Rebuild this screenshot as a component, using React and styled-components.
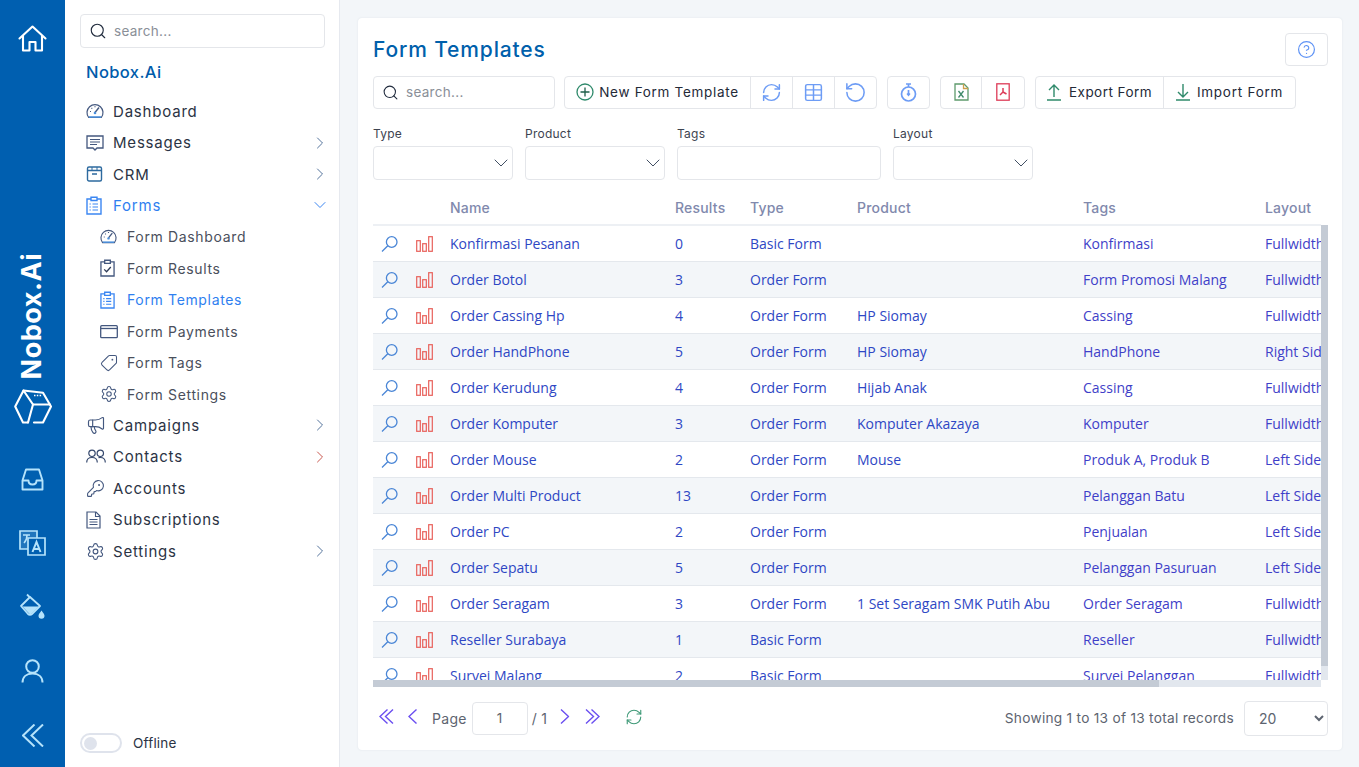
import React from "react";
import styled, { createGlobalStyle } from "styled-components";
import { Search, Tag, Settings, Megaphone, KeyRound, RefreshCw, Table, RotateCcw, CircleHelp, ChevronDown, ChevronRight } from "lucide-react";

const UI = `Inter, "Open Sans", sans-serif`;
const BODY = `"Open Sans", "Noto Sans", sans-serif`;

const Global = createGlobalStyle`
  html, body { margin: 0; padding: 0; height: 100%; background: #f3f6f9; }
  * { box-sizing: border-box; }
  #root { height: 100%; }
`;

const Shell = styled.div`
  display: flex; height: 767px; overflow: hidden; font-family: ${UI}; color: #2b3344;
`;
const Rail = styled.nav`
  width: 65px; flex: none; background: #005fb0; display: flex; flex-direction: column; align-items: center; padding-top: 6px;
`;
const RailSlot = styled.div`
  width: 65px; height: 64px; flex: none; display: flex; align-items: center; justify-content: center;
  color: ${(p) => (p.$bright ? "#ffffff" : "#b5e3fb")};
`;
const Brand = styled.div`
  margin-top: auto; display: flex; flex-direction: column; align-items: center; color: #fff;
`;
const BrandText = styled.span`
  writing-mode: vertical-rl; transform: rotate(180deg); font-size: 27px; font-weight: 700; letter-spacing: 0.5px; line-height: 30px;
  margin-bottom: 10px; margin-left: -1px;
`;
const Cube = styled.svg`
  width: 38px; height: 35px; margin-bottom: 23px; display: block;
`;

const Side = styled.aside`
  width: 275px; flex: none; background: #fff; border-right: 1px solid #e6e9ef; display: flex; flex-direction: column; padding: 14px 14px 14px 15px;
`;
const SearchBox = styled.div`
  display: flex; align-items: center; gap: 7px; height: ${(p) => p.$h || 34}px; width: ${(p) => p.$w || "100%"};
  border: 1px solid #e4e6ea; border-radius: 4px; padding: 0 8px; flex: none; background: #fff; color: #1f2a3c;
`;
const SearchHint = styled.span`
  font-size: 13.5px; color: #8a8f98; letter-spacing: 0.3px; margin-top: -1px;
`;
const SideBrand = styled.div`
  font-size: 16.5px; font-weight: 500; color: #005cab; margin: 14px 0 13.5px 6px; line-height: 20px; letter-spacing: 0.4px;
`;
const Menu = styled.ul`
  list-style: none; margin: 0; padding: 0;
`;
const MenuItem = styled.li`
  height: 31.43px; display: flex; align-items: center; padding-left: ${(p) => (p.$sub ? 20 : 6)}px;
  font-size: ${(p) => (p.$sub ? 14 : 15)}px; letter-spacing: ${(p) => (p.$sub ? 0.65 : 0.8)}px;
  color: ${(p) => (p.$active ? "#2f7ff0" : p.$sub ? "#4a4f5c" : "#2b3344")};
`;
const MenuIcon = styled.span`
  width: 27px; flex: none; display: flex; align-items: center;
  color: ${(p) => (p.$active ? "#3b86f2" : "#44587f")};
`;
const MenuLabel = styled.span`
  flex: 1;
`;
const MenuArrow = styled.span`
  display: flex; color: ${(p) => p.$c || "#54739c"}; margin-right: -5px;
`;
const OfflineRow = styled.div`
  margin-top: auto; display: flex; align-items: center; gap: 11px; font-size: 13.5px; color: #2b3344; letter-spacing: 0.2px;
`;
const Toggle = styled.span`
  width: 42px; height: 20px; border: 2px solid #dfe3ec; border-radius: 10px; padding: 2px; display: block;
  &::before { content: ""; display: block; width: 13px; height: 13px; border-radius: 50%; background: #dfe3ec; }
`;

const Main = styled.main`
  flex: 1; min-width: 0; padding: 18px 17px 17px 18px;
`;
const Card = styled.section`
  height: 732px; background: #fff; border-radius: 4px; box-shadow: 0 0 2px rgba(40, 60, 90, 0.1); padding: 15px 14px 15px 15px; display: flex; flex-direction: column;
`;
const TitleRow = styled.header`
  display: flex; justify-content: space-between; align-items: center; height: 33px;
`;
const Title = styled.h1`
  margin: 0; font-size: 21px; font-weight: 500; color: #0060ab; letter-spacing: 0.85px;
`;
const HelpButton = styled.button`
  width: 43px; height: 33px; border: 1px solid #e4e6ea; border-radius: 4px; background: #fff; display: flex; align-items: center; justify-content: center; color: #5f93f5; padding: 0;
`;
const Toolbar = styled.div`
  display: flex; margin-top: 10px; height: 33px; flex: none;
`;
const Group = styled.div`
  display: flex; border: 1px solid #e4e6ea; border-radius: 4px; margin-left: ${(p) => p.$ml || 10}px; height: 33px;
`;
const ToolButton = styled.button`
  width: ${(p) => p.$w}px; height: 31px; display: flex; align-items: center; justify-content: center; gap: ${(p) => p.$gap || 7}px; background: none; border: 0; padding: 0 0 1px; font-family: ${UI};
  font-size: 13.5px; letter-spacing: ${(p) => p.$ls || 0.62}px; white-space: nowrap;
  & + & { border-left: 1px solid #e4e6ea; }
  color: ${(p) => p.$c || "#242a38"};
`;
const ToolLabel = styled.span`
  color: #242a38;
`;
const Filters = styled.div`
  display: flex; gap: 12px; margin-top: 15px; flex: none;
`;
const Filter = styled.label`
  display: block; width: ${(p) => p.$w}px; font-size: 12px; line-height: 20px; color: #3d4350; letter-spacing: 0.25px;
`;
const SelectBox = styled.div`
  height: 34px; margin-top: 2px; border: 1px solid #e4e6ea; border-radius: 4px; display: flex; align-items: center; justify-content: flex-end; color: #414f63;
`;

const TableFrame = styled.div`
  position: relative; margin-top: 10px; height: 497px; width: 955px; flex: none;
`;
const TableClip = styled.div`
  width: 948px; height: 490px; overflow: hidden;
`;
const TrackV = styled.div`
  position: absolute; right: 0; top: 35px; width: 7px; height: 455px; background: #e2e7ee;
`;
const ThumbV = styled.div`
  height: 441px; background: #c4cbd5;
`;
const TrackH = styled.div`
  position: absolute; left: 0; bottom: 0; width: 948px; height: 7px; background: #e2e7ee;
`;
const ThumbH = styled.div`
  width: 786px; height: 7px; background: #c4cbd5;
`;
const DataTable = styled.table`
  table-layout: fixed; width: 1143px; border-collapse: separate; border-spacing: 0;
`;
const HeadCell = styled.th`
  background: #fff; height: 36px; border-bottom: 2px solid #edf0f4; text-align: left; padding: 1px 11px 0;
  font-size: 14px; font-weight: 500; color: #8189ad; letter-spacing: 0.2px; font-family: ${UI};
`;
const Row = styled.tr`
  background: ${(p) => (p.$odd ? "#f3f6f9" : "#fff")};
`;
const Cell = styled.td`
  height: 36px; padding: 0 11px; border-bottom: 1px solid #e4e8ed; font-family: ${BODY}; font-size: 14px; white-space: nowrap; overflow: hidden;
  color: ${(p) => p.$c || "#2e47c4"};
`;
const IconCell = styled(Cell)`
  padding: 0 ${(p) => p.$pr || 0}px 0 0;
  & svg { display: block; margin: 0 auto; }
`;

const Pager = styled.footer`
  display: flex; align-items: center; margin-top: 14px; height: 34px; flex: none; font-size: 14px; color: #5d6470; letter-spacing: 0.3px;
`;
const PagerIcon = styled.span`
  display: flex; width: ${(p) => p.$w}px; justify-content: center; color: ${(p) => p.$c || "#6b4ff0"}; margin-top: -3px;
`;
const PageInput = styled.div`
  width: 56px; height: 33px; border: 1px solid #e4e6ea; border-radius: 4px; display: flex; align-items: center; justify-content: center; margin: 0 4px; font-size: 13.5px;
`;
const Records = styled.span`
  margin-left: auto; font-size: 13.7px; letter-spacing: 0.27px;
`;
const PageSize = styled.select`
  width: 84px; height: 35px; margin-left: 10px; border: 1px solid #e4e6ea; border-radius: 4px; background: #fff; color: #5d6470; font-family: ${UI}; font-size: 14px; padding-left: 10px;
`;
const Gap = styled.span`
  width: ${(p) => p.$w}px; flex: none;
`;

/* drawn icons */
const HomeIcon = () => (
  <svg width="29" height="27" viewBox="0 0 29 27" fill="none" stroke="currentColor" strokeWidth="2.100" strokeLinejoin="round" strokeLinecap="round">
    <path d="M1.500 13.500L14.500 1.500l13 12" />
    <path d="M5 11v14.500h6.500v-8.500h6v8.500H24V11" />
  </svg>
);
const InboxIcon = () => (
  <svg width="23" height="23" viewBox="0 0 23 23" fill="none" stroke="currentColor" strokeWidth="1.900" strokeLinejoin="round">
    <path d="M5 1.500h13l3.500 11v9H1.500v-9z" />
    <path d="M1.500 12.500h6c0 2.500 1.800 4 4 4s4-1.500 4-4h6" />
  </svg>
);
const LangIcon = () => (
  <svg width="27" height="26" viewBox="0 0 27 26" fill="none" stroke="currentColor" strokeWidth="1.700" strokeLinejoin="miter">
    <path d="M1 1h17v18H1z" fill="rgba(181,227,251,.18)" />
    <path d="M9 8h17v17H9z" fill="#005fb0" />
    <path d="M4 5h7M8 5c0 3-1 6-3 8" strokeWidth="1.500" />
    <path d="M13.500 22l4-10 4 10M15 19h5" strokeWidth="2" />
  </svg>
);
const PaintIcon = () => (
  <svg width="28" height="28" viewBox="0 0 28 28" fill="none">
    <path d="M8 1.500l3 3" stroke="currentColor" strokeWidth="1.800" />
    <path d="M11 4L2 13l7 8c1 1 3 1 4 0l8-8z" stroke="currentColor" strokeWidth="1.800" strokeLinejoin="round" />
    <path d="M3.500 13.500h16l-7 7c-.8.800-1.800.800-2.500 0z" fill="currentColor" />
    <path d="M22.500 17.500c-1.800 2.500-3 3.800-3 5.300a3 3 0 0 0 6 0c0-1.500-1.200-2.800-3-5.300z" fill="currentColor" />
  </svg>
);
const UserIcon = () => (
  <svg width="23" height="24" viewBox="0 0 23 24" fill="none" stroke="currentColor" strokeWidth="2">
    <circle cx="11.500" cy="7.500" r="6.300" />
    <path d="M1.500 23.500c0-5.500 4-9 10-9s10 3.500 10 9" />
  </svg>
);
const DoubleChevron = ({ w, h, dir, sw = 1.5 }) => {
  const mid = h / 2;
  const arm = h / 2;
  const d = w - arm;
  const p = (x) => `M${x + arm} 0.5L${x} ${mid}L${x + arm} ${h - 0.5}`;
  return (
    <svg width={w + 2} height={h} viewBox={`-1 0 ${w + 2} ${h}`} fill="none" stroke="currentColor" strokeWidth={sw} style={dir === "right" ? { transform: "scaleX(-1)" } : undefined}>
      <path d={p(0)} /><path d={p(d)} />
    </svg>
  );
};
const SingleChevron = ({ h, dir }) => (
  <svg width={h / 2 + 2} height={h} viewBox={`-1 0 ${h / 2 + 2} ${h}`} fill="none" stroke="currentColor" strokeWidth="1.400" style={dir === "right" ? { transform: "scaleX(-1)" } : undefined}>
    <path d={`M${h / 2} 0.500L0 ${h / 2}L${h / 2} ${h - 0.5}`} />
  </svg>
);
const GaugeIcon = ({ s = 18 }) => (
  <svg width={s} height={s} viewBox="0 0 18 18" fill="none" stroke="currentColor" strokeWidth="1.200">
    <path d="M2.700 15.500A8 8 0 1 1 15.300 15.500z" />
    <path d="M3 15h12" stroke="#4c90dc" strokeWidth="1.600" />
    <path d="M9 10.500l4-5" strokeWidth="1.400" />
    <path d="M4 9.500h1M5.500 6l.7.700M9 4.300v1" />
    <circle cx="9" cy="11" r="1.300" fill="#4c90dc" stroke="none" />
  </svg>
);
const ChatIcon = () => (
  <svg width="18" height="18" viewBox="0 0 18 18" fill="none" stroke="currentColor" strokeWidth="1.300">
    <path d="M1 2h16v12h-6l-2 2-2-2H1z" />
    <path d="M4 5.500h10M4 8h10M4 10.500h7" strokeWidth="1.100" />
  </svg>
);
const BoxIcon = () => (
  <svg width="17" height="18" viewBox="0 0 17 18" fill="none" stroke="#2d6a9f" strokeWidth="1.400">
    <rect x="1.500" y="2" width="14" height="14" rx="1.500" />
    <path d="M1.500 5.500h14M6 9h5" />
    <path d="M6 2v3.500M11 2v3.500" strokeWidth="1" />
  </svg>
);
const ClipListIcon = ({ w = 16, h = 19 }) => (
  <svg width={w} height={h} viewBox="0 0 16 19" fill="none" stroke="currentColor" strokeWidth="1.400">
    <path d="M5 3H1v15h14V3h-4" />
    <path d="M5 1.200h6V4.500H5z" />
    <path d="M6.500 8H12M6.500 11H12M6.500 14H12M3.500 8h1.300M3.500 11h1.300M3.500 14h1.300" strokeWidth="1.200" />
  </svg>
);
const ClipCheckIcon = () => (
  <svg width="15" height="18" viewBox="0 0 16 19" fill="none" stroke="currentColor" strokeWidth="1.400">
    <path d="M5 3H1v15h14V3h-4" />
    <path d="M5 1.200h6V4.500H5z" />
    <path d="M4.500 11l2.500 2.500 4.500-5" stroke="#2f3c58" />
  </svg>
);
const CardIcon = () => (
  <svg width="18" height="15" viewBox="0 0 18 15" fill="none" stroke="currentColor" strokeWidth="1.300">
    <rect x="0.700" y="1.700" width="16.600" height="12" rx="1" />
    <path d="M0.700 4.500h16.600" />
  </svg>
);
const PeopleIcon = () => (
  <svg width="20" height="15" viewBox="0 0 20 15" fill="none" stroke="#35486d" strokeWidth="1.200">
    <circle cx="6" cy="4.300" r="3.200" />
    <circle cx="14.300" cy="4.300" r="3.200" />
    <path d="M0.700 13.500c0-3 2.200-5 5.300-5s5.300 2 5.300 5" />
    <path d="M12.500 8.600c.6-.1 1.200-.1 1.800-.1 3 0 5 2 5 5" />
  </svg>
);
const DocIcon = () => (
  <svg width="15" height="18" viewBox="0 0 15 18" fill="none" stroke="currentColor" strokeWidth="1.200">
    <path d="M1 1h9l4 4v12H1z" />
    <path d="M9.500 1v4.500H14M3.500 8.500h8M3.500 11h8M3.500 13.500h8" strokeWidth="1.100" />
  </svg>
);
const BarsIcon = () => (
  <svg width="17" height="16" viewBox="0 0 17 16" fill="none" stroke="#e8605a" strokeWidth="1.200">
    <rect x="0.700" y="4.700" width="3.600" height="10.600" />
    <rect x="6.700" y="7.700" width="3.600" height="7.600" />
    <rect x="12.700" y="0.700" width="3.600" height="14.600" />
  </svg>
);
const LensIcon = () => (
  <svg width="17" height="16" viewBox="0 0 17 16" fill="none" stroke="#4a86d6" strokeWidth="1.300">
    <circle cx="10.700" cy="6" r="5.300" />
    <path d="M6.800 9.800L1 15.500" />
  </svg>
);
const ExcelIcon = () => (
  <svg width="15" height="18" viewBox="0 0 15 18" fill="none" stroke="#5d9a6c" strokeWidth="1.300">
    <path d="M1 1h9l4 4v12H1z" />
    <path d="M9.500 1v4.500H14" stroke="#cda04c" />
    <path d="M4.500 8l5 6.500M9.500 8l-5 6.500" stroke="#3f8a6a" />
  </svg>
);
const PdfIcon = () => (
  <svg width="14" height="18" viewBox="0 0 14 18" fill="none" stroke="#dd3b58" strokeWidth="1.300">
    <rect x="0.800" y="0.800" width="12.400" height="16.400" />
    <path d="M7 5v4l-3 3M7 9l3.500 2" strokeWidth="1.500" />
  </svg>
);
const NewIcon = () => (
  <svg width="18" height="18" viewBox="0 0 18 18" fill="none" stroke="#2f8a6b" strokeWidth="1.300">
    <circle cx="9" cy="9" r="8" />
    <path d="M9 4.500v9M4.500 9h9" stroke="#1f5f4a" />
  </svg>
);
const TimerIcon = () => (
  <svg width="17" height="19" viewBox="0 0 17 19" fill="none" stroke="currentColor" strokeWidth="1.700">
    <circle cx="8.500" cy="11" r="7" />
    <path d="M6 1h5M8.500 1v3" />
    <path d="M8.500 7v5" />
    <path d="M7 10.500l1.500 2 1.500-2" strokeWidth="1.300" />
  </svg>
);
const UploadIcon = () => (
  <svg width="14" height="17" viewBox="0 0 14 17" fill="none" stroke="#2f8a6b" strokeWidth="1.400">
    <path d="M7 1.200V13M2 6l5-5 5 5M0 16h14" />
  </svg>
);
const DownloadIcon = () => (
  <svg width="14" height="17" viewBox="0 0 14 17" fill="none" stroke="#2f8a6b" strokeWidth="1.400">
    <path d="M7 0v12.800M2 8l5 5 5-5M0 16h14" />
  </svg>
);

const menu = [
  { label: "Dashboard", icon: <GaugeIcon /> },
  { label: "Messages", icon: <ChatIcon />, arrow: true },
  { label: "CRM", icon: <BoxIcon />, arrow: true },
  { label: "Forms", icon: <ClipListIcon />, active: true, open: true },
  { label: "Form Dashboard", sub: true, icon: <GaugeIcon s={17} /> },
  { label: "Form Results", sub: true, icon: <ClipCheckIcon /> },
  { label: "Form Templates", sub: true, active: true, icon: <ClipListIcon w={15} h={18} /> },
  { label: "Form Payments", sub: true, icon: <CardIcon /> },
  { label: "Form Tags", sub: true, icon: <Tag size={18} strokeWidth={1.4} style={{ transform: "scaleX(-1)" }} /> },
  { label: "Form Settings", sub: true, icon: <Settings size={18} strokeWidth={1.4} /> },
  { label: "Campaigns", icon: <Megaphone size={20} strokeWidth={1.4} />, arrow: true },
  { label: "Contacts", icon: <PeopleIcon />, arrow: true, arrowColor: "#c9584f" },
  { label: "Accounts", icon: <KeyRound size={19} strokeWidth={1.4} /> },
  { label: "Subscriptions", icon: <DocIcon /> },
  { label: "Settings", icon: <Settings size={19} strokeWidth={1.4} />, arrow: true },
];

const rows = [
  ["Konfirmasi Pesanan", "0", "Basic Form", "", "Konfirmasi", "Fullwidth"],
  ["Order Botol", "3", "Order Form", "", "Form Promosi Malang", "Fullwidth"],
  ["Order Cassing Hp", "4", "Order Form", "HP Siomay", "Cassing", "Fullwidth"],
  ["Order HandPhone", "5", "Order Form", "HP Siomay", "HandPhone", "Right Sidebar"],
  ["Order Kerudung", "4", "Order Form", "Hijab Anak", "Cassing", "Fullwidth"],
  ["Order Komputer", "3", "Order Form", "Komputer Akazaya", "Komputer", "Fullwidth"],
  ["Order Mouse", "2", "Order Form", "Mouse", "Produk A, Produk B", "Left Sidebar"],
  ["Order Multi Product", "13", "Order Form", "", "Pelanggan Batu", "Left Sidebar"],
  ["Order PC", "2", "Order Form", "", "Penjualan", "Left Sidebar"],
  ["Order Sepatu", "5", "Order Form", "", "Pelanggan Pasuruan", "Left Sidebar"],
  ["Order Seragam", "3", "Order Form", "1 Set Seragam SMK Putih Abu", "Order Seragam", "Fullwidth"],
  ["Reseller Surabaya", "1", "Basic Form", "", "Reseller", "Fullwidth"],
  ["Survei Malang", "2", "Basic Form", "", "Survei Pelanggan", "Fullwidth"],
];
const widths = [36, 30, 225, 75, 107, 226, 182, 262];
const heads = ["", "", "Name", "Results", "Type", "Product", "Tags", "Layout"];
const FilterArrow = () => <ChevronDown size={24} strokeWidth={1} style={{ marginRight: -1 }} />;

export default function App() {
  return (
    <Shell>
      <Global />
      <Rail>
        <RailSlot $bright><HomeIcon /></RailSlot>
        <Brand>
          <BrandText>Nobox.Ai</BrandText>
          <Cube viewBox="0 0 38 35" fill="none" stroke="currentColor" strokeWidth="2.100" strokeLinejoin="round" strokeLinecap="round">
            <path d="M9.500 1.500L29 3.800 37 17.500 29 33.500h-9" />
            <path d="M14 33.500H9L1.200 17.500 9.500 1.500 19 15.500h17" />
            <path d="M19 15.500L14 33.500" />
            <path d="M20 6.500h8" strokeWidth="1.300" strokeDasharray="1.500 1.300" strokeLinecap="butt" />
          </Cube>
        </Brand>
        <RailSlot><InboxIcon /></RailSlot>
        <RailSlot><LangIcon /></RailSlot>
        <RailSlot><PaintIcon /></RailSlot>
        <RailSlot><UserIcon /></RailSlot>
        <RailSlot><DoubleChevron w={20} h={23} sw={2} /></RailSlot>
      </Rail>

      <Side>
        <SearchBox>
          <Search size={18} strokeWidth={1.5} />
          <SearchHint>search...</SearchHint>
        </SearchBox>
        <SideBrand>Nobox.Ai</SideBrand>
        <Menu>
          {menu.map((m) => (
            <MenuItem key={m.label} $sub={m.sub} $active={m.active}>
              <MenuIcon $active={m.active}>{m.icon}</MenuIcon>
              <MenuLabel>{m.label}</MenuLabel>
              {m.arrow && <MenuArrow $c={m.arrowColor}><ChevronRight size={20} strokeWidth={1.2} /></MenuArrow>}
              {m.open && <MenuArrow $c="#3b86f2"><ChevronDown size={20} strokeWidth={1.2} /></MenuArrow>}
            </MenuItem>
          ))}
        </Menu>
        <OfflineRow><Toggle />Offline</OfflineRow>
      </Side>

      <Main>
        <Card>
          <TitleRow>
            <Title>Form Templates</Title>
            <HelpButton aria-label="help"><CircleHelp size={19} strokeWidth={1.5} /></HelpButton>
          </TitleRow>
          <Toolbar>
            <SearchBox $h={33} $w="182px">
              <Search size={17} strokeWidth={1.5} />
              <SearchHint>search...</SearchHint>
            </SearchBox>
            <Group $ml={9}>
              <ToolButton $w={185} $gap={5} $ls={0.7}><NewIcon /><ToolLabel>New Form Template</ToolLabel></ToolButton>
              <ToolButton $w={42} $c="#6d9cf5"><RefreshCw size={21} strokeWidth={1.7} /></ToolButton>
              <ToolButton $w={42} $c="#6d9cf5"><Table size={21} strokeWidth={1.7} /></ToolButton>
              <ToolButton $w={42} $c="#6d9cf5"><RotateCcw size={23} strokeWidth={1.6} /></ToolButton>
            </Group>
            <Group>
              <ToolButton $w={41} $c="#6d9cf5"><TimerIcon /></ToolButton>
            </Group>
            <Group>
              <ToolButton $w={40}><ExcelIcon /></ToolButton>
              <ToolButton $w={43}><PdfIcon /></ToolButton>
            </Group>
            <Group>
              <ToolButton $w={127} $gap={8} $ls={0.45}><UploadIcon /><ToolLabel>Export Form</ToolLabel></ToolButton>
              <ToolButton $w={132} $ls={0.75}><DownloadIcon /><ToolLabel>Import Form</ToolLabel></ToolButton>
            </Group>
          </Toolbar>
          <Filters>
            <Filter $w={140}>Type<SelectBox><FilterArrow /></SelectBox></Filter>
            <Filter $w={140}>Product<SelectBox><FilterArrow /></SelectBox></Filter>
            <Filter $w={204}>Tags<SelectBox /></Filter>
            <Filter $w={140}>Layout<SelectBox><FilterArrow /></SelectBox></Filter>
          </Filters>
          <TableFrame>
            <TableClip>
              <DataTable>
                <colgroup>
                  {widths.map((w, i) => <col key={i} width={w} />)}
                </colgroup>
                <thead>
                  <tr>{heads.map((h, i) => <HeadCell key={i}>{h}</HeadCell>)}</tr>
                </thead>
                <tbody>
                  {rows.map((r, i) => (
                    <Row key={r[0]} $odd={i % 2 === 1}>
                      <IconCell $pr={4}><LensIcon /></IconCell>
                      <IconCell><BarsIcon /></IconCell>
                      {r.map((c, j) => <Cell key={j} $c={j >= 4 ? "#3f3fc8" : undefined}>{c}</Cell>)}
                    </Row>
                  ))}
                </tbody>
              </DataTable>
            </TableClip>
            <TrackV><ThumbV /></TrackV>
            <TrackH><ThumbH /></TrackH>
          </TableFrame>
          <Pager>
            <PagerIcon $w={26}><DoubleChevron w={13} h={15} sw={1.4} /></PagerIcon>
            <PagerIcon $w={27}><SingleChevron h={15} /></PagerIcon>
            <Gap $w={6} />
            Page
            <Gap $w={1} />
            <PageInput>1</PageInput>
            / 1
            <Gap $w={9} />
            <PagerIcon $w={16}><SingleChevron h={15} dir="right" /></PagerIcon>
            <Gap $w={12} />
            <PagerIcon $w={16}><DoubleChevron w={13} h={15} sw={1.4} dir="right" /></PagerIcon>
            <Gap $w={25} />
            <PagerIcon $w={18} $c="#3f9a78"><RefreshCw size={20} strokeWidth={1.5} /></PagerIcon>
            <Records>Showing 1 to 13 of 13 total records</Records>
            <PageSize defaultValue="20"><option>10</option><option>20</option><option>50</option></PageSize>
          </Pager>
        </Card>
      </Main>
    </Shell>
  );
}
